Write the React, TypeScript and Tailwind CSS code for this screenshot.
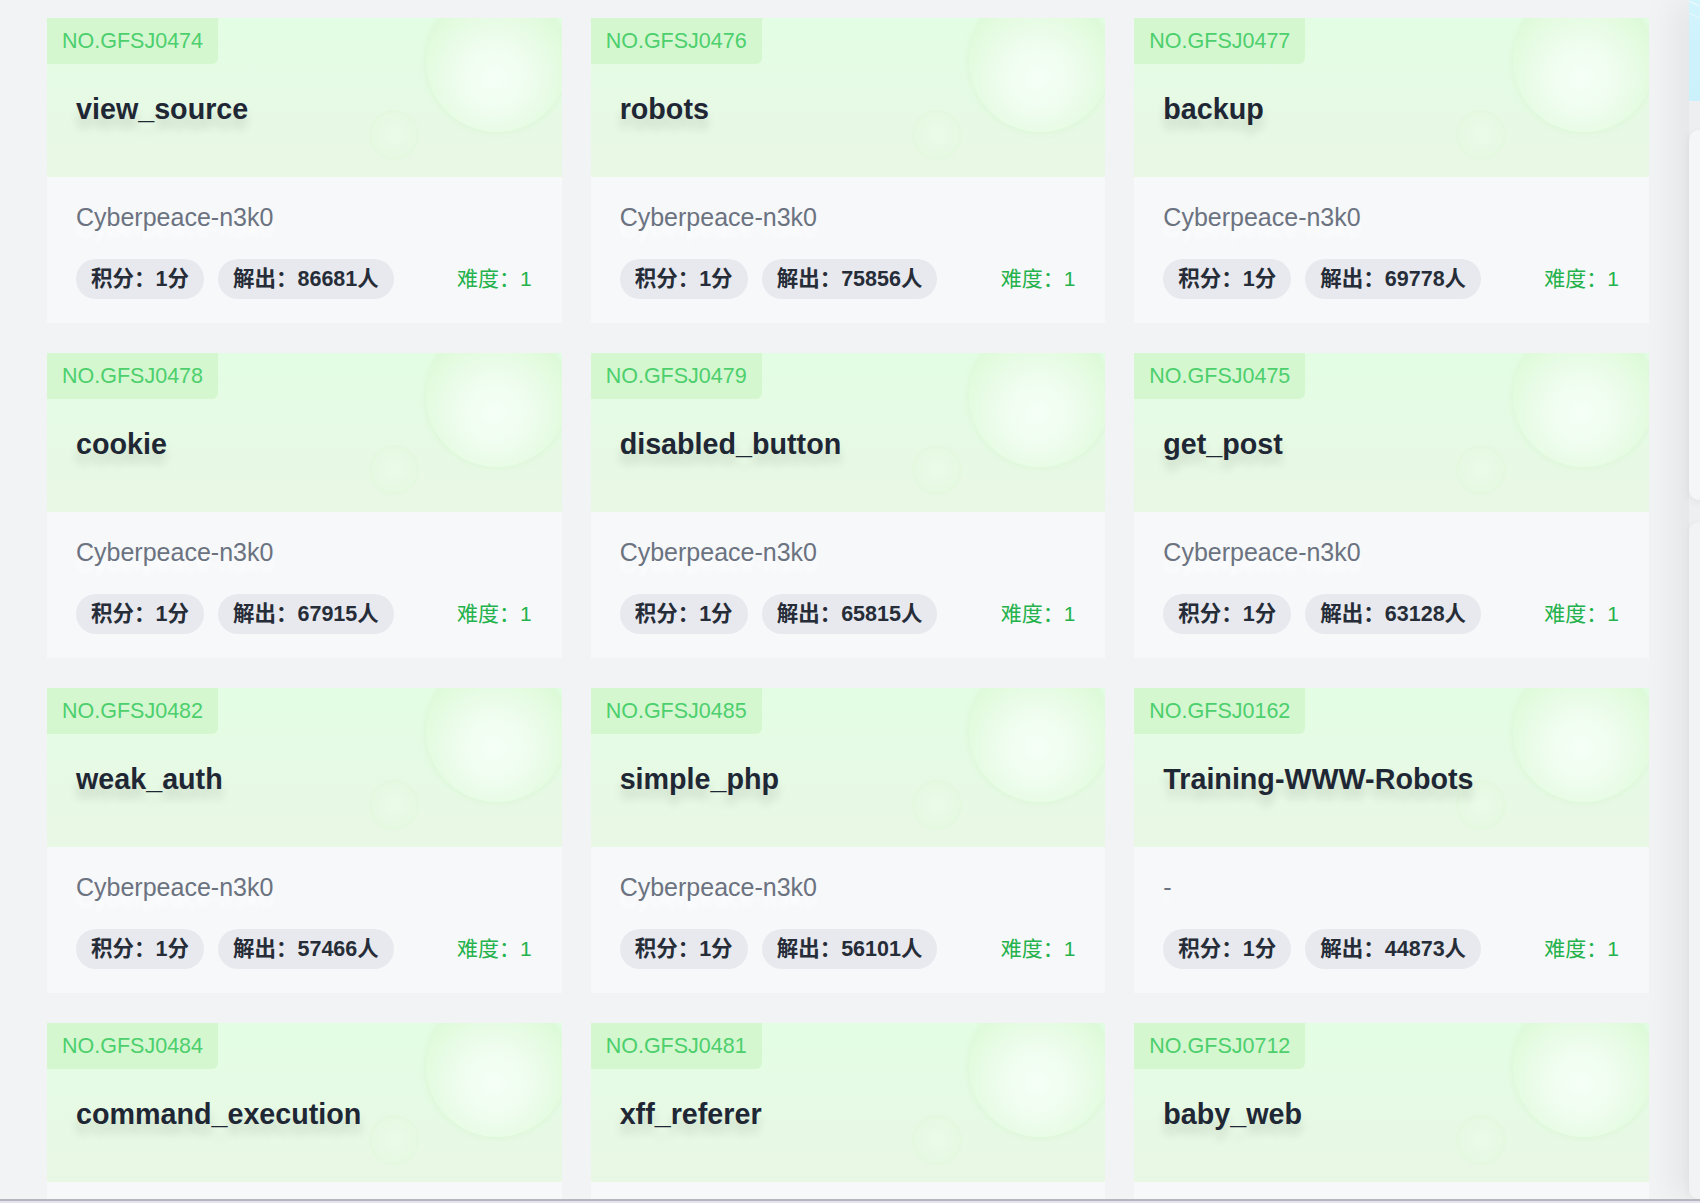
import React from "react";

type Item = { no: string; title: string; author: string; solved: string };

const items: Item[] = [
  { no: "NO.GFSJ0474", title: "view_source", author: "Cyberpeace-n3k0", solved: "86681" },
  { no: "NO.GFSJ0476", title: "robots", author: "Cyberpeace-n3k0", solved: "75856" },
  { no: "NO.GFSJ0477", title: "backup", author: "Cyberpeace-n3k0", solved: "69778" },
  { no: "NO.GFSJ0478", title: "cookie", author: "Cyberpeace-n3k0", solved: "67915" },
  { no: "NO.GFSJ0479", title: "disabled_button", author: "Cyberpeace-n3k0", solved: "65815" },
  { no: "NO.GFSJ0475", title: "get_post", author: "Cyberpeace-n3k0", solved: "63128" },
  { no: "NO.GFSJ0482", title: "weak_auth", author: "Cyberpeace-n3k0", solved: "57466" },
  { no: "NO.GFSJ0485", title: "simple_php", author: "Cyberpeace-n3k0", solved: "56101" },
  { no: "NO.GFSJ0162", title: "Training-WWW-Robots", author: "-", solved: "44873" },
  { no: "NO.GFSJ0484", title: "command_execution", author: "Cyberpeace-n3k0", solved: "43210" },
  { no: "NO.GFSJ0481", title: "xff_referer", author: "Cyberpeace-n3k0", solved: "42875" },
  { no: "NO.GFSJ0712", title: "baby_web", author: "Cyberpeace-n3k0", solved: "40113" },
];

function Card({ item }: { item: Item }) {
  return (
    <div className="flex flex-col h-[305px] bg-[#f7f8fa]">
      <div className="relative h-[159px] shrink-0 overflow-hidden bg-gradient-to-b from-[#e3fde4] to-[#e9f7e5]">
        <div className="absolute right-[-6px] top-[-28px] w-[142px] h-[142px] rounded-full bg-[radial-gradient(circle_at_48%_62%,#f5fff6_0%,#effdef_30%,#e3fbdf_60%,#d6f8cf_85%,#cdf5c4_100%)] shadow-[0_0_6px_rgba(205,245,196,0.6)]" />
        <div className="absolute right-[143px] top-[92px] w-[50px] h-[50px] rounded-full bg-[radial-gradient(circle_at_50%_50%,#ebfbe9_0%,#e6f9e2_60%,#dcf5d6_100%)]" />
        <div className="relative flex flex-col items-start">
          <div className="h-[46px] flex items-center px-[15px] bg-[#d4f7d0] rounded-br-[6px] text-[21.5px] text-[#4dcf6d]">
            {item.no}
          </div>
          <div className="mt-[28px] pl-[29px] text-[28.7px] leading-[34px] font-bold text-[#1f2735] [text-shadow:0_10px_10px_rgba(0,0,0,0.13)]">
            {item.title}
          </div>
        </div>
      </div>
      <div className="flex flex-col px-[29px] pt-[25px]">
        <div className="text-[25px] leading-[30px] text-[#6b7280] [text-shadow:0_11px_4px_rgba(255,255,255,0.9)]">
          {item.author}
        </div>
        <div className="mt-[27px] flex items-center justify-between">
          <div className="flex items-center gap-[14px]">
            <span className="h-[40px] flex items-center px-[15px] rounded-full bg-[#e8e9ee] text-[21.5px] font-bold text-[#262d38]">
              积分：1分
            </span>
            <span className="h-[40px] flex items-center px-[15px] rounded-full bg-[#e8e9ee] text-[21.5px] font-bold text-[#262d38]">
              解出：{item.solved}人
            </span>
          </div>
          <span className="text-[21px] text-[#23b24b] pr-[1px]">难度：1</span>
        </div>
      </div>
    </div>
  );
}

export default function App() {
  return (
    <div
      className="w-[1700px] h-[1203px] flex flex-col overflow-hidden bg-[#f2f3f5]"
      style={{ fontFamily: '"Liberation Sans", "Noto Sans CJK SC", Arial, sans-serif' }}
    >
      <div className="h-[1199px] flex overflow-hidden">
        <div className="w-[1689px] shrink-0 pl-[47px] pt-[18px]">
          <div className="w-[1602px] grid grid-cols-3 gap-x-[29px] gap-y-[30px]">
            {items.map((it) => (
              <Card key={it.no} item={it} />
            ))}
          </div>
        </div>
        <div className="w-[300px] shrink-0 flex flex-col bg-[#eeeff1] shadow-[-18px_0_30px_rgba(0,0,0,0.05)]">
          <div className="h-[101px] bg-gradient-to-br from-[#d2f4fd] to-[#c3eefa] relative overflow-hidden">
            <div className="absolute left-[-10px] top-[10px] w-[60px] h-[1px] bg-white/70 rotate-[25deg]" />
            <div className="absolute left-[-10px] top-[22px] w-[60px] h-[1px] bg-white/50 rotate-[25deg]" />
          </div>
          <div className="mt-[29px] h-[370px] rounded-[10px] bg-[#f5f6f8] shadow-[0_2px_10px_rgba(0,0,0,0.06)]" />
          <div className="mt-[22px] flex-1 rounded-[10px] bg-[#f2f3f5] shadow-[0_2px_10px_rgba(0,0,0,0.05)]" />
        </div>
      </div>
      <div className="h-[4px] shrink-0 border-t-[2px] border-[#b6b6be] bg-[#e6e2f0]" />
    </div>
  );
}
